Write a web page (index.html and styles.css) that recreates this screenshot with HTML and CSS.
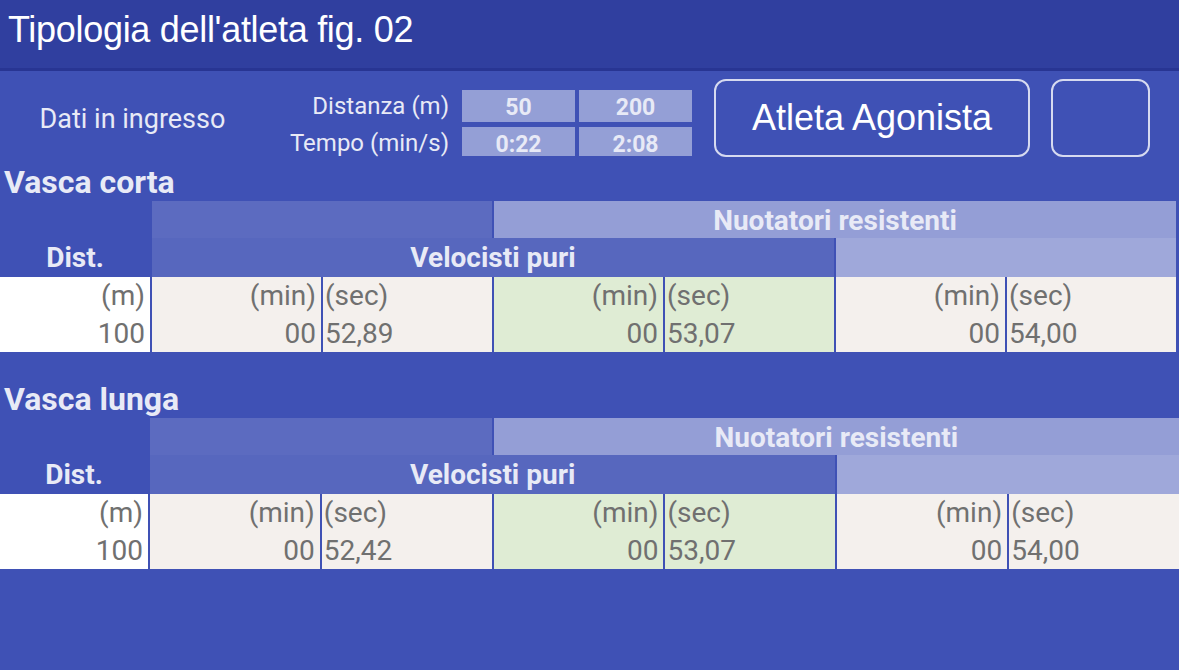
FILE: index.html
```html
<!DOCTYPE html>
<html>
<head>
    <title>Tipologia dell'atleta</title>
    <link rel="stylesheet" href="styles.css">
</head>
<body>
    <div class="topbar">
        <h1>Tipologia dell'atleta fig. 02</h1>
    </div>

    <div class="inputs">
        <div class="inputs-title">Dati in ingresso</div>
        <div class="inputs-grid">
            <div class="in-label">Distanza (m)</div>
            <div class="in-box">50</div>
            <div class="in-box">200</div>
            <div class="in-label">Tempo (min/s)</div>
            <div class="in-box">0:22</div>
            <div class="in-box">2:08</div>
        </div>
        <button class="btn btn-wide">Atleta Agonista</button>
        <button class="btn btn-small"></button>
    </div>

    <h2 class="section-title">Vasca corta</h2>
    <div class="result short">
        <div class="hd"></div>
        <div class="hd hd-mid span2"></div>
        <div class="hd hd-light span4">Nuotatori resistenti</div>

        <div class="hd hd-dist">Dist.</div>
        <div class="hd hd-mid2 span4">Velocisti puri</div>
        <div class="hd hd-light2 span2"></div>

        <div class="cell c-white right">(m)<br>100</div>
        <div class="cell c-beige right">(min)<br>00</div>
        <div class="cell c-beige">(sec)<br>52,89</div>
        <div class="cell c-green right">(min)<br>00</div>
        <div class="cell c-green">(sec)<br>53,07</div>
        <div class="cell c-beige right">(min)<br>00</div>
        <div class="cell c-beige">(sec)<br>54,00</div>
    </div>

    <h2 class="section-title">Vasca lunga</h2>
    <div class="result long">
        <div class="hd"></div>
        <div class="hd hd-mid span2"></div>
        <div class="hd hd-light span4">Nuotatori resistenti</div>

        <div class="hd hd-dist">Dist.</div>
        <div class="hd hd-mid2 span4">Velocisti puri</div>
        <div class="hd hd-light2 span2"></div>

        <div class="cell c-white right">(m)<br>100</div>
        <div class="cell c-beige right">(min)<br>00</div>
        <div class="cell c-beige">(sec)<br>52,42</div>
        <div class="cell c-green right">(min)<br>00</div>
        <div class="cell c-green">(sec)<br>53,07</div>
        <div class="cell c-beige right">(min)<br>00</div>
        <div class="cell c-beige">(sec)<br>54,00</div>
    </div>
</body>
</html>
```

FILE: styles.css
```css
body {
    margin: 0;
    background-color: #3f51b5;
    font-family: Roboto, "Liberation Sans", sans-serif;
    color: #e8eaf6;
}

.topbar {
    height: 68px;
    background-color: #303f9f;
    border-bottom: 3px solid #283593;
}

.topbar h1 {
    margin: 0;
    padding-left: 8px;
    font-family: "Liberation Sans", Arial, sans-serif;
    font-weight: normal;
    font-size: 36px;
    letter-spacing: -0.3px;
    line-height: 60px;
    color: #fff;
}

/* input block */
.inputs {
    display: flex;
    align-items: flex-start;
    height: 93px;
    padding-top: 8px;
    box-sizing: border-box;
}

.inputs-title {
    width: 265px;
    margin-top: 24px;
    text-align: center;
    font-size: 27px;
    line-height: 32px;
}

.inputs-grid {
    display: grid;
    grid-template-columns: 193px 113px 113px;
    grid-template-rows: 32px 29px;
    column-gap: 4px;
    row-gap: 5px;
    margin-top: 11px;
}

.in-label {
    padding-right: 9px;
    text-align: right;
    font-size: 24px;
    line-height: 32px;
    white-space: nowrap;
}

.in-box {
    background-color: #949fd6;
    text-align: center;
    font-weight: bold;
    font-size: 23px;
    line-height: 32px;
    padding-top: 2px;
    box-sizing: border-box;
}

.btn {
    height: 78px;
    background: transparent;
    border: 2px solid #d6daf0;
    border-radius: 12px;
    color: #fff;
    font-family: "Liberation Sans", Arial, sans-serif;
    font-size: 36px;
    padding: 0;
}

.btn-wide {
    width: 316px;
    margin-left: 22px;
}

.btn-small {
    width: 99px;
    margin-left: 21px;
}

.section-title {
    margin: 0;
    padding-left: 4px;
    font-size: 32px;
    font-weight: bold;
    line-height: 37px;
    height: 37px;
}

/* result tables */
.result {
    display: grid;
    column-gap: 2px;
    grid-template-rows: 37px 39px 75px;
}

.result.short {
    width: 1176px;
    grid-template-columns: 150px repeat(6, 1fr);
    margin-bottom: 29px;
}

.result.long {
    width: 1179px;
    grid-template-columns: 148px repeat(6, 1fr);
}

.hd {
    font-weight: bold;
    font-size: 28px;
    text-align: center;
    line-height: 40px;
    white-space: nowrap;
}

.span2 { grid-column: span 2; }
.span4 { grid-column: span 4; }

.hd-mid { background-color: #5c6bc0; }
.hd-mid2 { background-color: #5767be; }
.hd-light { background-color: #949ed6; line-height: 39px; }
.hd-light2 { background-color: #9fa8da; }

.cell {
    font-size: 28px;
    line-height: 38px;
    color: #707070;
    padding: 0 2px;
    white-space: nowrap;
}

.cell.right {
    text-align: right;
    padding-right: 5px;
}

.c-white { background-color: #fff; }
.c-beige { background-color: #f4f0ed; }
.c-green { background-color: #dfecd4; }
```
